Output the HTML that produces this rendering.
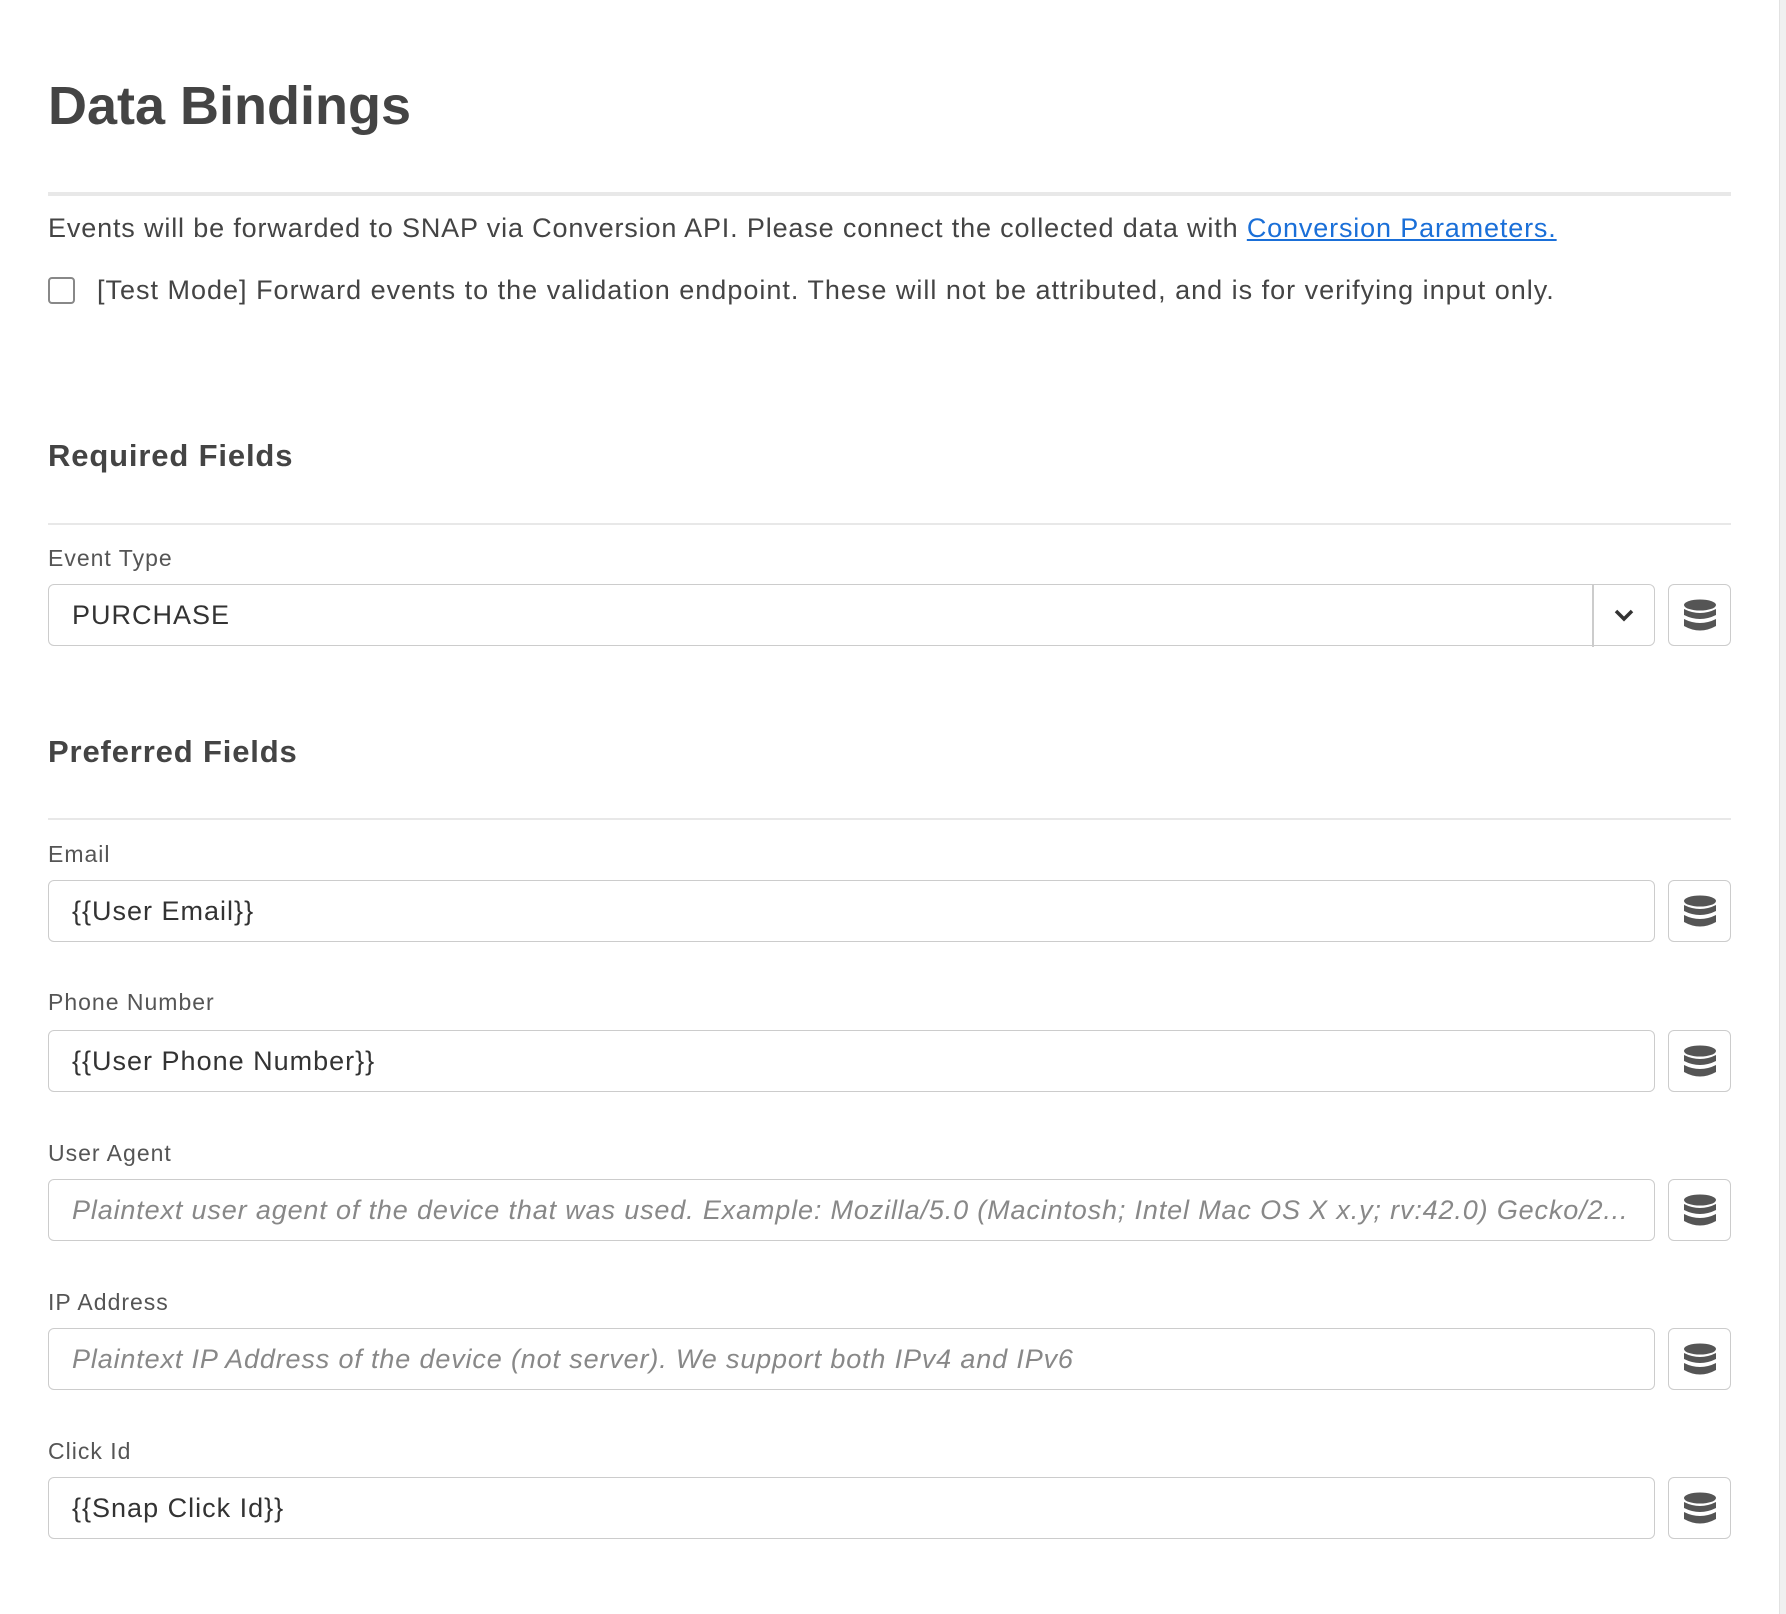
<!DOCTYPE html>
<html><head><meta charset="utf-8"><style>
html,body{margin:0;padding:0;background:#fff;width:1786px;height:1614px;overflow:hidden;font-family:"Liberation Sans",sans-serif;color:#444}
.a{position:absolute}
.sb{position:absolute;left:1779px;top:0;width:7px;height:1614px;background:#f0f0f0;border-left:1px solid #e2e2e2}
h1{position:absolute;left:48px;top:72px;margin:0;font-size:54px;font-weight:bold;color:#444;line-height:68px}
.hr{position:absolute;left:48px;width:1683px;background:#e8e8e8}
.t{position:absolute;left:48px;font-size:27px;line-height:34px;color:#444;white-space:nowrap;letter-spacing:1px}
.t a{color:#1a6fd8;text-decoration:underline}
.cb{position:absolute;left:48px;top:277px;width:23px;height:23px;border:2.5px solid #888;border-radius:4px}
h2{position:absolute;left:48px;margin:0;font-size:31px;font-weight:bold;color:#444;line-height:40px;letter-spacing:0.85px}
.lb{position:absolute;left:48px;font-size:23px;color:#555;line-height:28px;letter-spacing:1px}
.in{position:absolute;left:48px;height:60px;border:1.5px solid #ccc;border-radius:6px;box-sizing:content-box;font-size:27px;line-height:60px;padding-left:23px;width:1582px;color:#333;white-space:nowrap;overflow:hidden;letter-spacing:1px}
.in i{color:#888;letter-spacing:0.85px}
.db{position:absolute;left:1668px;width:61px;height:60px;border:1.5px solid #ccc;border-radius:6px}
.db svg{position:absolute;left:14px;top:14px}
.sel{position:absolute;left:1592px;width:1.5px;height:63px;background:#ccc}
</style></head><body>
<div class="sb"></div>
<h1>Data Bindings</h1>
<div class="hr" style="top:192px;height:4px"></div>
<div class="t" style="top:211px;letter-spacing:0.85px">Events will be forwarded to SNAP via Conversion API. Please connect the collected data with <a>Conversion Parameters.</a></div>
<div class="cb"></div>
<div class="t" style="left:97px;top:273px">[Test Mode] Forward events to the validation endpoint. These will not be attributed, and is for verifying input only.</div>

<h2 style="top:436px">Required Fields</h2>
<div class="hr" style="top:523px;height:2px"></div>
<div class="lb" style="top:544px">Event Type</div>
<div class="in" style="top:584px">PURCHASE</div>
<div class="sel" style="top:584px"></div>
<svg class="a" style="left:1613px;top:607px" width="22" height="16" viewBox="0 0 22 16"><path d="M3 4 L11 12 L19 4" fill="none" stroke="#333" stroke-width="3.5"/></svg>
<div class="db" style="top:584px"><svg width="34" height="34" viewBox="0 0 34 34"><ellipse cx="17" cy="6" rx="16" ry="5.5" fill="#555"/><path d="M1 10 Q17 18 33 10 V16 Q17 24 1 16Z" fill="#555"/><path d="M1 20 Q17 28 33 20 V27 Q17 36 1 27Z" fill="#555"/></svg></div>

<h2 style="top:732px">Preferred Fields</h2>
<div class="hr" style="top:818px;height:2px"></div>

<div class="lb" style="top:840px">Email</div>
<div class="in" style="top:880px">{{User Email}}</div>
<div class="db" style="top:880px"><svg width="34" height="34" viewBox="0 0 34 34"><ellipse cx="17" cy="6" rx="16" ry="5.5" fill="#555"/><path d="M1 10 Q17 18 33 10 V16 Q17 24 1 16Z" fill="#555"/><path d="M1 20 Q17 28 33 20 V27 Q17 36 1 27Z" fill="#555"/></svg></div>

<div class="lb" style="top:988px">Phone Number</div>
<div class="in" style="top:1030px">{{User Phone Number}}</div>
<div class="db" style="top:1030px"><svg width="34" height="34" viewBox="0 0 34 34"><ellipse cx="17" cy="6" rx="16" ry="5.5" fill="#555"/><path d="M1 10 Q17 18 33 10 V16 Q17 24 1 16Z" fill="#555"/><path d="M1 20 Q17 28 33 20 V27 Q17 36 1 27Z" fill="#555"/></svg></div>

<div class="lb" style="top:1139px">User Agent</div>
<div class="in" style="top:1179px"><i>Plaintext user agent of the device that was used. Example: Mozilla/5.0 (Macintosh; Intel Mac OS X x.y; rv:42.0) Gecko/2...</i></div>
<div class="db" style="top:1179px"><svg width="34" height="34" viewBox="0 0 34 34"><ellipse cx="17" cy="6" rx="16" ry="5.5" fill="#555"/><path d="M1 10 Q17 18 33 10 V16 Q17 24 1 16Z" fill="#555"/><path d="M1 20 Q17 28 33 20 V27 Q17 36 1 27Z" fill="#555"/></svg></div>

<div class="lb" style="top:1288px">IP Address</div>
<div class="in" style="top:1328px"><i>Plaintext IP Address of the device (not server). We support both IPv4 and IPv6</i></div>
<div class="db" style="top:1328px"><svg width="34" height="34" viewBox="0 0 34 34"><ellipse cx="17" cy="6" rx="16" ry="5.5" fill="#555"/><path d="M1 10 Q17 18 33 10 V16 Q17 24 1 16Z" fill="#555"/><path d="M1 20 Q17 28 33 20 V27 Q17 36 1 27Z" fill="#555"/></svg></div>

<div class="lb" style="top:1437px">Click Id</div>
<div class="in" style="top:1477px">{{Snap Click Id}}</div>
<div class="db" style="top:1477px"><svg width="34" height="34" viewBox="0 0 34 34"><ellipse cx="17" cy="6" rx="16" ry="5.5" fill="#555"/><path d="M1 10 Q17 18 33 10 V16 Q17 24 1 16Z" fill="#555"/><path d="M1 20 Q17 28 33 20 V27 Q17 36 1 27Z" fill="#555"/></svg></div>
</body></html>
